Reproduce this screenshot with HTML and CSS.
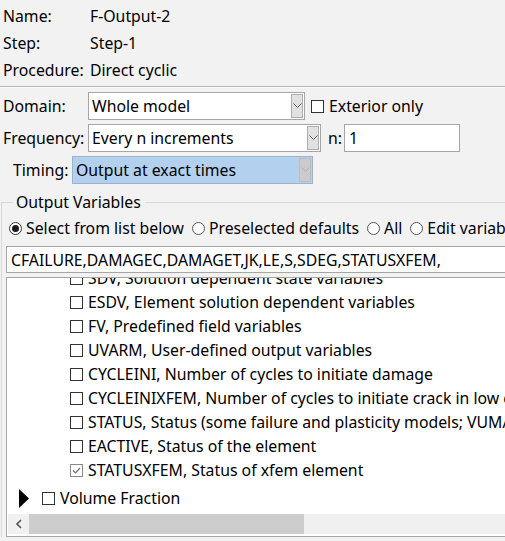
FILE: index.html
```html
<!DOCTYPE html>
<html lang="en">
<head>
    <meta charset="UTF-8">
    <title>Edit Field Output Request</title>
    <link rel="stylesheet" href="styles.css">
</head>
<body>
<div class="info">
    <div class="info-row"><span class="info-label">Name:</span><span>F-Output-2</span></div>
    <div class="info-row"><span class="info-label">Step:</span><span>Step-1</span></div>
    <div class="info-row"><span class="info-label">Procedure:</span><span>Direct cyclic</span></div>
</div>
<div class="sep"></div>
<div class="opts">
    <div class="opt-row">
        <span class="opt-label">Domain:</span>
        <div class="combo combo-domain">
            <span class="combo-text">Whole model</span>
            <span class="combo-btn"><svg width="9" height="6" viewBox="0 0 9 6"><path d="M0.5 0.5 L4.5 4.5 L8.5 0.5" fill="none" stroke="#606060"/></svg></span>
        </div>
        <span class="check"><span class="box"></span>Exterior only</span>
    </div>
    <div class="opt-row">
        <span class="opt-label">Frequency:</span>
        <div class="combo combo-freq">
            <span class="combo-text">Every n increments</span>
            <span class="combo-btn"><svg width="9" height="6" viewBox="0 0 9 6"><path d="M0.5 0.5 L4.5 4.5 L8.5 0.5" fill="none" stroke="#606060"/></svg></span>
        </div>
        <span class="n-label">n:</span>
        <div class="textbox n-box">1</div>
    </div>
    <div class="opt-row">
        <span class="opt-label timing-label">Timing:</span>
        <div class="combo combo-timing">
            <span class="combo-text">Output at exact times</span>
            <span class="combo-btn"><svg width="9" height="6" viewBox="0 0 9 6"><path d="M0.5 0.5 L4.5 4.5 L8.5 0.5" fill="none" stroke="#b0b0b0"/></svg></span>
        </div>
    </div>
</div>
<fieldset class="group">
    <legend>Output Variables</legend>
    <div class="radios">
        <span class="radio"><span class="dot on"></span>Select from list below</span>
        <span class="radio"><span class="dot"></span>Preselected defaults</span>
        <span class="radio"><span class="dot"></span>All</span>
        <span class="radio"><span class="dot"></span>Edit variables</span>
    </div>
    <div class="textbox var-field">CFAILURE,DAMAGEC,DAMAGET,JK,LE,S,SDEG,STATUSXFEM,</div>
    <div class="tree">
        <div class="tree-view">
            <div class="tree-inner">
                <div class="item"><span class="box"></span>SDV, Solution dependent state variables</div>
                <div class="item"><span class="box"></span>ESDV, Element solution dependent variables</div>
                <div class="item"><span class="box"></span>FV, Predefined field variables</div>
                <div class="item"><span class="box"></span>UVARM, User-defined output variables</div>
                <div class="item"><span class="box"></span>CYCLEINI, Number of cycles to initiate damage</div>
                <div class="item"><span class="box"></span>CYCLEINIXFEM, Number of cycles to initiate crack in low cycle fatigue</div>
                <div class="item"><span class="box"></span>STATUS, Status (some failure and plasticity models; VUMAT)</div>
                <div class="item"><span class="box"></span>EACTIVE, Status of the element</div>
                <div class="item"><span class="box checked"><svg width="11" height="11" viewBox="0 0 11 11"><path d="M2 5.5 L4.5 8 L9 3" fill="none" stroke="#707070" stroke-width="1.2"/></svg></span>STATUSXFEM, Status of xfem element</div>
                <div class="node">
                    <svg class="arrow" width="10" height="19" viewBox="0 0 10 19"><path d="M0 0 L10 9.5 L0 19 Z" fill="#000"/></svg>
                    <span class="box"></span>Volume Fraction
                </div>
            </div>
        </div>
        <div class="hscroll">
            <span class="hs-btn"><svg width="8" height="10" viewBox="0 0 8 10"><path d="M6 1 L2 5 L6 9" fill="none" stroke="#555" stroke-width="1.6"/></svg></span>
            <span class="hs-thumb"></span>
        </div>
    </div>
</fieldset>
</body>
</html>
```

FILE: styles.css
```css
*{
    box-sizing: border-box;
}
html, body{
    margin: 0;
    padding: 0;
}
body{
    width: 505px;
    height: 541px;
    overflow: hidden;
    background-color: #f2f2f2;
    font-family: "Noto Sans", "Open Sans", sans-serif;
    font-size: 15.8px;
    color: #000;
}
.info{
    padding-top: 2px;
    padding-left: 3px;
}
.info-row{
    display: flex;
    align-items: center;
    height: 27px;
}
.info-label{
    width: 87px;
}
.sep{
    margin-top: 3px;
    border-top: 1px solid #b4b4b4;
    border-bottom: 1px solid #fcfcfc;
}
.opts{
    padding-top: 4px;
    padding-left: 3px;
}
.opt-row{
    display: flex;
    align-items: center;
    height: 28px;
    margin-bottom: 4px;
    white-space: nowrap;
}
.opt-label{
    width: 85px;
}
.timing-label{
    width: 69px;
    padding-left: 10px;
}
.combo{
    display: flex;
    align-items: center;
    height: 28px;
    background-color: #fff;
    border: 1px solid #a6a6a6;
    padding: 1px 1px 1px 3px;
}
.combo-text{
    flex: 1;
}
.combo-btn{
    display: flex;
    align-items: center;
    justify-content: center;
    width: 12px;
    height: 100%;
    background-color: #e1e1e1;
    border: 1px solid #adadad;
}
.combo-domain{
    width: 217px;
}
.combo-freq{
    width: 233px;
}
.combo-timing{
    width: 241px;
    background-color: #b3d1ef;
    border-color: #9cb3ca;
}
.combo-timing .combo-btn{
    background-color: #cbcbcb;
    border-color: #bdbdbd;
}
.check{
    display: flex;
    align-items: center;
    margin-left: 6px;
}
.box{
    display: inline-flex;
    align-items: center;
    justify-content: center;
    width: 13px;
    height: 13px;
    border: 1px solid #333;
    background-color: #fff;
    margin-right: 5px;
    flex-shrink: 0;
}
.box.checked{
    border-color: #8a8a8a;
}
.n-label{
    margin-left: 7px;
    width: 16px;
}
.textbox{
    height: 28px;
    background-color: #fff;
    border: 1px solid #a6a6a6;
    padding: 0 4px;
    display: flex;
    align-items: center;
    white-space: nowrap;
}
.n-box{
    width: 116px;
}
.group{
    margin: 9px 0 0 1px;
    padding: 0 0 0 4px;
    border: 1px solid #d9d9d9;
    border-right: none;
    border-bottom: none;
    width: 560px;
    min-width: 0;
}
.group legend{
    margin-left: 7px;
    padding: 0 4px 0 3px;
    line-height: 18px;
}
.radios{
    display: flex;
    align-items: center;
    height: 24px;
    margin-top: 5px;
    padding-left: 3px;
    white-space: nowrap;
}
.radio{
    display: flex;
    align-items: center;
    margin-right: 8px;
}
.dot{
    width: 13px;
    height: 13px;
    border-radius: 50%;
    border: 1px solid #555;
    background-color: #fff;
    margin-right: 4px;
    position: relative;
    flex-shrink: 0;
}
.dot.on{
    border-color: #333;
}
.dot.on::after{
    content: "";
    position: absolute;
    left: 2px;
    top: 2px;
    width: 7px;
    height: 7px;
    border-radius: 50%;
    background-color: #1a1a1a;
}
.var-field{
    margin-top: 6px;
    width: 600px;
    height: 27px;
    padding-left: 4px;
}
.tree{
    margin-top: 4px;
    width: 600px;
    height: 260px;
    border: 1px solid #a6a6a6;
    background-color: #fff;
    display: flex;
    flex-direction: column;
}
.tree-view{
    flex: 1;
    overflow: hidden;
}
.tree-inner{
    margin-top: -12px;
    white-space: nowrap;
}
.item{
    display: flex;
    align-items: center;
    height: 24px;
    padding-left: 63px;
}
.node{
    display: flex;
    align-items: center;
    height: 24px;
    margin-top: 4px;
    padding-left: 12px;
}
.arrow{
    margin-right: 13px;
}
.hscroll{
    display: flex;
    height: 20px;
    margin: 0 0 2px 1px;
    background-color: #f0f0f0;
}
.hs-btn{
    width: 21px;
    display: flex;
    align-items: center;
    justify-content: center;
    background-color: #f0f0f0;
}
.hs-thumb{
    width: 275px;
    background-color: #cdcdcd;
}
```
